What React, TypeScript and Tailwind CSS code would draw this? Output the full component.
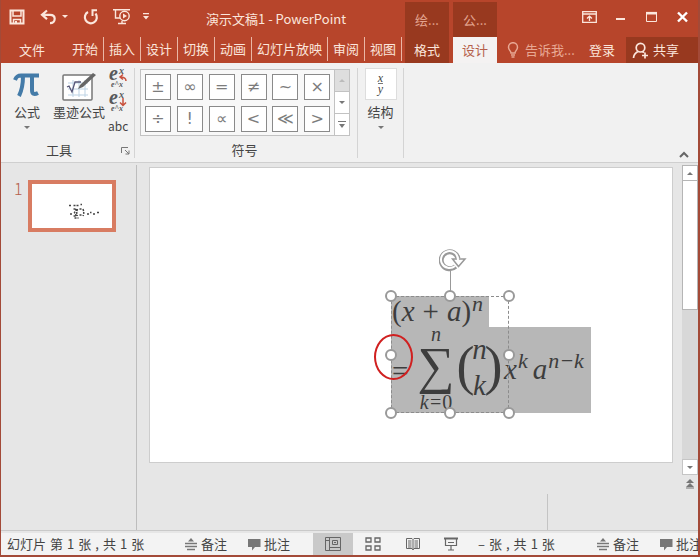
import type { ReactNode } from "react";

function Caret({ className = "" }: { className?: string }) {
  return (
    <svg viewBox="0 0 6 3" className={"h-[3px] w-[6px] " + className} fill="currentColor" aria-hidden="true">
      <path d="M0 0h6L3 3z" />
    </svg>
  );
}

const tabs = ["开始", "插入", "设计", "切换", "动画", "幻灯片放映", "审阅", "视图"];

function QuickAccess() {
  return (
    <div className="flex w-[150px] items-center pb-1 pl-2">
      <button aria-label="保存" className="w-[31px]">
        <svg viewBox="0 0 16 16" className="size-4" fill="none" stroke="currentColor" strokeWidth="2">
          <path d="M1.5 1.5h13v13h-13z" />
          <path d="M4 2v5h8V2M4.500 14.500v-4h7v4" strokeWidth="1.500" />
          <path d="M6 12h2v2.500H6z" fill="currentColor" stroke="none" />
        </svg>
      </button>
      <button aria-label="撤消" className="w-[22px]">
        <svg viewBox="0 0 17 16" className="h-4 w-[17px]" fill="none" stroke="currentColor" strokeWidth="2.200">
          <path d="M7 1.500 2 5.800l5 4.400M2.500 5.800h7.500c3 0 4.700 1.700 4.700 4s-1.700 4.400-4.700 4.400" />
        </svg>
      </button>
      <button aria-label="撤消选项" className="w-[21px]"><Caret /></button>
      <button aria-label="重复" className="w-[30px]">
        <svg viewBox="0 0 16 16" className="size-4" fill="none" stroke="currentColor" strokeWidth="2.200">
          <path d="M5 3A6 6 0 1 0 12.500 4.500" />
          <path d="M8.500 1.200H14M9.500 1v6" strokeWidth="2" />
        </svg>
      </button>
      <button aria-label="从头开始" className="w-[30px]">
        <svg viewBox="0 0 18 17" className="h-[17px] w-[18px]" fill="none" stroke="currentColor" strokeWidth="1.400">
          <path d="M0 1.700h17M2.500 2v8H7M5 15.500h8M9 13v2.500" />
          <circle cx="11.500" cy="8" r="4.700" />
          <path d="M10 5.500v5l4-2.500z" fill="currentColor" stroke="none" />
        </svg>
      </button>
      <button aria-label="自定义快速访问工具栏">
        <svg viewBox="0 0 6 7" className="h-[7px] w-[6px]" fill="currentColor"><path d="M0 0h6v1.300H0zM0 3h6L3 6.500z" /></svg>
      </button>
    </div>
  );
}

function Header() {
  return (
    <header className="bg-[#b7452b] text-[#fbe6dc]">
      <div className="flex h-[37px] items-stretch">
        <QuickAccess />
        <h1 className="flex-1 pt-[9px] pl-[55px] text-[13px] leading-5 font-normal whitespace-nowrap">演示文稿1 - PowerPoint</h1>
        <div className="mt-[2px] mr-1 w-11 bg-[#98391f] pt-2 text-center text-[13px] leading-5 text-[#e3a48f]">绘...</div>
        <div className="mt-[2px] w-11 bg-[#98391f] pt-2 text-center text-[13px] leading-5 text-[#e3a48f]">公...</div>
        <div className="flex w-[201px] items-center justify-end gap-4 pr-2 pb-1">
          <button aria-label="功能区显示选项">
            <svg viewBox="0 0 15 12" className="h-3 w-[15px]" fill="none" stroke="currentColor" strokeWidth="1.300">
              <path d="M.7.700h13.600v10.600H.7zM.7 3h13.600M7.500 10V5.500M5 7.500l2.500-2.300L10 7.500" />
            </svg>
          </button>
          <button aria-label="最小化" className="w-[15px]">
            <svg viewBox="0 0 15 12" className="h-3 w-[15px]"><path d="M3 7h9v2H3z" fill="currentColor" /></svg>
          </button>
          <button aria-label="最大化" className="w-[15px]">
            <svg viewBox="0 0 15 12" className="h-3 w-[15px]" fill="none" stroke="currentColor"><path d="M2.500 1.500h10v9h-10z" /><path d="M2 2.200h11" strokeWidth="2.600" /></svg>
          </button>
          <button aria-label="关闭" className="w-[15px]">
            <svg viewBox="0 0 15 12" className="h-3 w-[15px]" fill="none" stroke="#fff" strokeWidth="2.400"><path d="m3 1.500 9 9m0-9-9 9" /></svg>
          </button>
        </div>
      </div>
      <nav className="flex h-[26px] items-stretch text-[13px] leading-6 whitespace-nowrap">
        <button className="w-[62px] text-center">文件</button>
        <div className="flex flex-1 pb-[2px]">
          {tabs.map((t) => (
            <button key={t} className="border-r border-[#eab7a6] px-[5px] first:pl-[9px]">{t}</button>
          ))}
        </div>
        <button className="mr-1 w-11 bg-[#98391f]">格式</button>
        <button className="w-11 bg-[#f4f2f2] text-[#b5604b]">设计</button>
        <div className="flex w-[201px] items-stretch">
          <label className="flex items-center gap-[6px] pl-[10px] text-[#e8a894]">
            <svg viewBox="0 0 12 16" className="h-4 w-3" fill="none" stroke="currentColor" strokeWidth="1.500">
              <path d="M4 11C4 9 1.500 8 1.500 5.200a4.500 4.500 0 0 1 9 0C10.500 8 8 9 8 11zM4 13h4M4.500 15h3" />
            </svg>
            <input aria-label="告诉我" placeholder="告诉我..." className="w-[54px] bg-transparent placeholder:text-[#e8a894] outline-none" />
          </label>
          <button className="ml-2 w-[30px]">登录</button>
          <button className="ml-auto flex w-[72px] items-center gap-1 bg-[#98391f] pl-[6px]">
            <svg viewBox="0 0 17 17" className="size-[17px]" fill="none" stroke="currentColor" strokeWidth="1.700">
              <circle cx="8.500" cy="5.700" r="4.300" />
              <path d="M1.500 16c.2-3 1.700-5 4.300-6.500M10.500 9.500l1.500 1.200M13 10.500v6M10 13.500h6" />
            </svg>
            共享
          </button>
        </div>
      </nav>
    </header>
  );
}

function ConvertIcon({ down = false }: { down?: boolean }) {
  return (
    <svg viewBox="0 0 20 20" className="size-5 overflow-visible" aria-hidden="true">
      <g fill="#58595b" fontFamily="Liberation Serif, serif" fontStyle="italic" fontWeight="bold">
        <text x="1" y="12" fontSize="20">e</text>
        <text x="11" y="6" fontSize="10">x</text>
        <text x="3" y="19" fontSize="8">e^x</text>
      </g>
      {down ? (
        <path d="M15 6v7m-3-2.500 3 3 3-3" fill="none" stroke="#c8503c" strokeWidth="1.500" />
      ) : (
        <path d="M18 13c0-3-2-4-6-4m3-2.500L12 9l3 2.500" fill="none" stroke="#c8503c" strokeWidth="1.500" />
      )}
    </svg>
  );
}

const symbols = ["±", "∞", "=", "≠", "~", "×", "÷", "!", "∝", "<", "≪", ">"];

function Ribbon() {
  return (
    <section className="flex h-[100px] border-b border-[#cfcfcf] bg-[#f1f1f1] pt-[5px] text-[13px] leading-5 text-[#444]">
      <div className="flex h-[90px] w-[134px] flex-col border-r border-[#d4d4d4]">
        <div className="flex h-[74px]">
          <button className="flex w-[52px] flex-col items-center pt-1">
            <svg viewBox="0 0 28 26" className="h-[26px] w-7" fill="none" stroke="#447ba8" strokeWidth="4" aria-hidden="true">
              <path d="M2 8c1.500-4 3-4.500 6-4.500h18M10 4c0 9-1 14-4 20M19 4v14c0 4 2 5 6 3" />
            </svg>
            <span className="mt-1">公式</span>
            <Caret className="mt-1 text-[#777]" />
          </button>
          <button className="flex w-[52px] flex-col items-center pt-1 whitespace-nowrap">
            <svg viewBox="0 0 34 30" className="h-[30px] w-[34px]" fill="none" aria-hidden="true">
              <rect x="1" y="3" width="29" height="25" rx="1" fill="#fff" stroke="#777" strokeWidth="1.500" />
              <path d="M6 11h20M6 17h20M6 23h20M11 8v17M17 8v17M23 8v17" stroke="#bdd3e5" />
              <path d="m5 15 2-1 3 6 3-10h6" stroke="#557" strokeWidth="1.300" />
              <path d="m16 17 2-4L31 1l3 2-13 12z" fill="#666" />
            </svg>
            <span>墨迹公式</span>
          </button>
          <div className="flex flex-col items-center gap-1 pl-[3px]">
            <button aria-label="专业型"><ConvertIcon /></button>
            <button aria-label="线性"><ConvertIcon down /></button>
            <button className="pt-[2px] text-xs leading-4">abc</button>
          </div>
        </div>
        <div className="flex items-center">
          <span className="flex-1 pr-1 text-center leading-4">工具</span>
          <button aria-label="工具选项" className="pr-1">
            <svg viewBox="0 0 9 9" className="size-[9px]" fill="none" stroke="#777"><path d="M.5 7V1.500H7M4 4l4 4M8 4.500V8H4.500" /></svg>
          </button>
        </div>
      </div>
      <div className="flex h-[90px] w-[223px] flex-col border-r border-[#d4d4d4] pl-[5px]">
        <div className="mt-px flex h-[68px] w-[210px] border border-[#c2c2c2] bg-[#f8f8f8]">
          <div className="grid flex-1 grid-cols-6 content-center gap-x-[6px] gap-y-[6px] px-1">
            {symbols.map((s) => (
              <button key={s} className="size-[26px] border border-[#8a8a8a] bg-white text-center font-['DejaVu_Sans',sans-serif] text-[16px] leading-6 text-[#7c7c7c]">{s}</button>
            ))}
          </div>
          <div className="flex w-[15px] flex-col border-l border-[#c2c2c2] text-[#777]">
            <button aria-label="上一行" className="flex flex-1 items-center justify-center bg-[#dedede] text-[#bbb]"><Caret className="rotate-180" /></button>
            <button aria-label="下一行" className="flex flex-1 items-center justify-center border-y border-[#c2c2c2] bg-white"><Caret /></button>
            <button aria-label="其他" className="flex flex-1 items-center justify-center bg-white">
              <svg viewBox="0 0 8 8" className="size-2" fill="currentColor"><path d="M0 0h8v1H0zM1 3h6L4 7z" /></svg>
            </button>
          </div>
        </div>
        <span className="mt-[6px] pr-2 text-center leading-4">符号</span>
      </div>
      <div className="flex h-[90px] w-[46px] flex-col items-center border-r border-[#d4d4d4]">
        <button className="flex flex-col items-center">
          <span className="flex size-8 flex-col items-center justify-center border border-[#ddd] bg-white font-['Liberation_Serif',serif] text-xs leading-[10px] italic">
            <span className="border-b border-[#777] leading-[9px]">x</span>
            <span>y</span>
          </span>
          <span className="mt-[2px]">结构</span>
          <Caret className="mt-1 text-[#777]" />
        </button>
      </div>
      <div className="flex flex-1 items-end justify-end pr-[9px] pb-1">
        <button aria-label="折叠功能区">
          <svg viewBox="0 0 10 7" className="h-[7px] w-[10px]" fill="none" stroke="#666" strokeWidth="2"><path d="m1 6 4-4 4 4" /></svg>
        </button>
      </div>
    </section>
  );
}

function Handle({ className }: { className: string }) {
  return <span className={"absolute size-3 -translate-x-1/2 -translate-y-1/2 rounded-full border-2 border-[#999] bg-white " + className} />;
}

function Sup({ children }: { children: ReactNode }) {
  return <span className="pb-4 pl-px text-[22px]">{children}</span>;
}

function Equation() {
  return (
    <div className="absolute top-[128px] left-[241px] h-[117px] w-[118px] font-['Liberation_Serif',serif] text-[29px] text-[#3d3d3d] italic">
      <div className="flex h-[31px] w-[98px] items-center bg-[#b7b7b7] pl-px leading-[31px] whitespace-pre">
        <span className="not-italic">(</span>
        <span>x</span>
        <span className="px-2 not-italic">+</span>
        <span>a</span>
        <span className="not-italic">)</span>
        <Sup>n</Sup>
      </div>
      <div className="flex h-[86px] w-[200px] items-start bg-[#b7b7b7]">
        <span className="w-[27px] pt-[28px] pl-px leading-8 not-italic">=</span>
        <span className="flex h-[85px] w-[36px] flex-col items-center overflow-hidden">
          <span className="text-[20px] leading-[14px]">n</span>
          <span className="h-[54px] text-[52px] leading-[50px] not-italic">∑</span>
          <span className="text-[20px] leading-5 whitespace-nowrap">k=<span className="not-italic">0</span></span>
        </span>
        <span className="flex w-[50px] items-start justify-center pt-2 pl-px">
          <span className="text-[54px] leading-[62px] not-italic">(</span>
          <span className="-mx-[5px] flex w-5 flex-col items-center">
            <span className="leading-7">n</span>
            <span className="leading-[44px]">k</span>
          </span>
          <span className="text-[54px] leading-[62px] not-italic">)</span>
        </span>
        <span className="flex items-center pt-[18px] leading-8">
          <span>x</span>
          <Sup>k</Sup>
          <span className="pl-[5px]">a</span>
          <Sup>n−k</Sup>
        </span>
      </div>
      <div className="absolute inset-0 border border-dashed border-[#8c8c8c]" />
      <div className="absolute -top-[26px] left-1/2 h-[26px] w-px bg-[#999]" />
      <svg viewBox="0 0 28 24" className="absolute -top-[48px] left-[48px] h-6 w-7" fill="none" aria-hidden="true">
        <path d="M16.500 18.500A8.500 8.500 0 1 1 19 10.500" stroke="#999" strokeWidth="5" />
        <path d="M13.500 11h12.500l-6.500 7.500z" fill="#fff" stroke="#999" strokeWidth="1.500" />
        <path d="M16 18A8.500 8.500 0 1 1 19 12" stroke="#fff" strokeWidth="2" />
      </svg>
      <Handle className="top-0 left-0" />
      <Handle className="top-0 left-1/2" />
      <Handle className="top-0 left-full" />
      <Handle className="top-1/2 left-0" />
      <Handle className="top-1/2 left-full" />
      <Handle className="top-full left-0" />
      <Handle className="top-full left-1/2" />
      <Handle className="top-full left-full" />
      <div className="absolute top-[38px] -left-[17px] h-[46px] w-[39px] rounded-[50%] border-2 border-[#d02020]" />
    </div>
  );
}

function Workspace() {
  return (
    <main className="flex flex-1 bg-[#e6e6e6] pt-[2px]">
      <aside className="w-[136px] border-r border-[#bdbdbd] pt-[15px]">
        <button className="flex w-full pl-[13px] text-left">
          <span className="w-[14px] text-[16px] leading-4 font-light text-[#b5604b]">1</span>
          <span className="h-[52px] w-[88px] border-4 border-[#d87c62] bg-white">
            <svg viewBox="0 0 80 44" className="h-11 w-20" fill="none" stroke="#444" aria-label="幻灯片缩略图">
              <path d="M37 21.500h3m1.500 0h2m1 0h3m1-1h1.500M38 30h2m1.500-5h3l-2 3.500 2 3.500h-3m1 2h4m-1-9c-1 3-1 5 0 7m2-7h2m-2 6h2m1.500-6c1 3 1 5 0 7M55 30h2m1-1.500h1.500M61 30h3m1-1.500h3" strokeWidth="1.500" strokeDasharray="2 1" />
            </svg>
          </span>
        </button>
      </aside>
      <section className="flex flex-1 flex-col pt-[2px] pr-[9px] pl-[12px]">
        <div className="relative aspect-[525/297] border border-[#cdcdcd] bg-white"><Equation /></div>
        <div className="mt-auto ml-auto h-9 w-[126px] border-l border-[#c4c4c4]" />
      </section>
      <div className="flex w-4 flex-col text-[#777]">
        <button aria-label="向上滚动" className="flex h-4 items-center justify-center border border-[#b5b5b5] bg-white"><Caret className="rotate-180" /></button>
        <div className="h-[278px] bg-[#d8d8d8]">
          <div className="h-[129px] border border-t-0 border-[#b5b5b5] bg-white" />
        </div>
        <button aria-label="向下滚动" className="flex h-4 items-center justify-center border border-[#c5c5c5] bg-white"><Caret /></button>
        <button aria-label="上一张幻灯片" className="mt-1 flex justify-center">
          <svg viewBox="0 0 8 10" className="h-[10px] w-2" fill="currentColor"><path d="m4 0 4 4H0zM4 4l4 4H0zM0 8.500h8v1H0z" /></svg>
        </button>
      </div>
    </main>
  );
}

function NotesButton() {
  return (
    <button className="flex items-center gap-[3px]">
      <svg viewBox="0 0 14 14" className="size-[14px]" fill="none" stroke="#777" strokeWidth="1.300"><path d="M1 6.500h12M1 9.500h12M3 12.500h8" /><path d="m7 1 3 3.500H4z" fill="#777" stroke="none" /></svg>
      备注
    </button>
  );
}

function CommentsButton() {
  return (
    <button className="flex shrink-0 items-center gap-[3px]">
      <svg viewBox="0 0 14 14" className="size-[14px]" fill="#777"><path d="M1 2h12.500v8H8l-3 3.500V10H1z" /></svg>
      批注
    </button>
  );
}

function Words({ words, className }: { words: string[]; className: string }) {
  return (
    <span className={"flex gap-1 " + className}>
      {words.map((w, i) => <span key={i}>{w}</span>)}
    </span>
  );
}

function StatusBar() {
  return (
    <footer className="flex h-[22px] items-center overflow-hidden bg-[#f3f3f3] text-[13px] leading-5 whitespace-nowrap text-[#444]">
      <Words className="w-[183px] pl-[6px]" words={["幻灯片", "第", "1", "张", ",", "共", "1", "张"]} />
      <div className="flex w-[129px] gap-5"><NotesButton /><CommentsButton /></div>
      <div className="flex h-full text-[#666]">
        <button aria-label="普通视图" className="flex h-full w-10 items-center justify-center bg-[#c9c9c9]">
          <svg viewBox="0 0 16 14" className="h-[14px] w-4" fill="none" stroke="currentColor"><path d="M.5.500h15v13H.5zM4.500.500v13M.5 3.500h4M4.500 10.500h11M7.500 3.500h5v4h-5zM9 5.500h2" /></svg>
        </button>
        <button aria-label="幻灯片浏览" className="flex w-10 items-center justify-center">
          <svg viewBox="0 0 16 14" className="h-[14px] w-4" fill="none" stroke="currentColor" strokeWidth="1.300"><path d="M1 1h5v4H1zM10 1h5v4h-5zM1 9h5v4H1zM10 9h5v4h-5z" /></svg>
        </button>
        <button aria-label="阅读视图" className="flex w-10 items-center justify-center">
          <svg viewBox="0 0 16 14" className="h-[14px] w-4" fill="none" stroke="currentColor"><path d="M1.500 1.500H7l1 1 1-1h5.500v10H9l-1 1.500-1-1.500H1.500zM8 2.500v10M3 4h3.500M3 6h3.500M3 8h3.500M3 10h3.500M9.500 4H13M9.500 6H13M9.500 8H13M9.500 10H13" /></svg>
        </button>
        <button aria-label="幻灯片放映" className="flex w-9 items-center justify-center">
          <svg viewBox="0 0 16 14" className="h-[14px] w-4" fill="none" stroke="currentColor" strokeWidth="1.200"><path d="M1 1.500h14" strokeWidth="2" /><path d="M2.500 2v6.500h11V2M8 8.500V13M5 13h6M5 5.500h6" /></svg>
        </button>
      </div>
      <Words className="w-[127px] pl-[9px]" words={["–", "张", ",", "共", "1", "张"]} />
      <div className="flex flex-1 gap-5 overflow-hidden"><NotesButton /><CommentsButton /></div>
    </footer>
  );
}

export default function App() {
  return (
    <div className="flex min-h-screen flex-col border-r-2 border-b-2 border-l border-[#a34a38] font-['Noto_Sans_CJK_SC',sans-serif]">
      <Header />
      <Ribbon />
      <Workspace />
      <div className="flex h-[3px] border-t border-[#c9c9c9] bg-[#e6e6e6]" />
      <StatusBar />
    </div>
  );
}
